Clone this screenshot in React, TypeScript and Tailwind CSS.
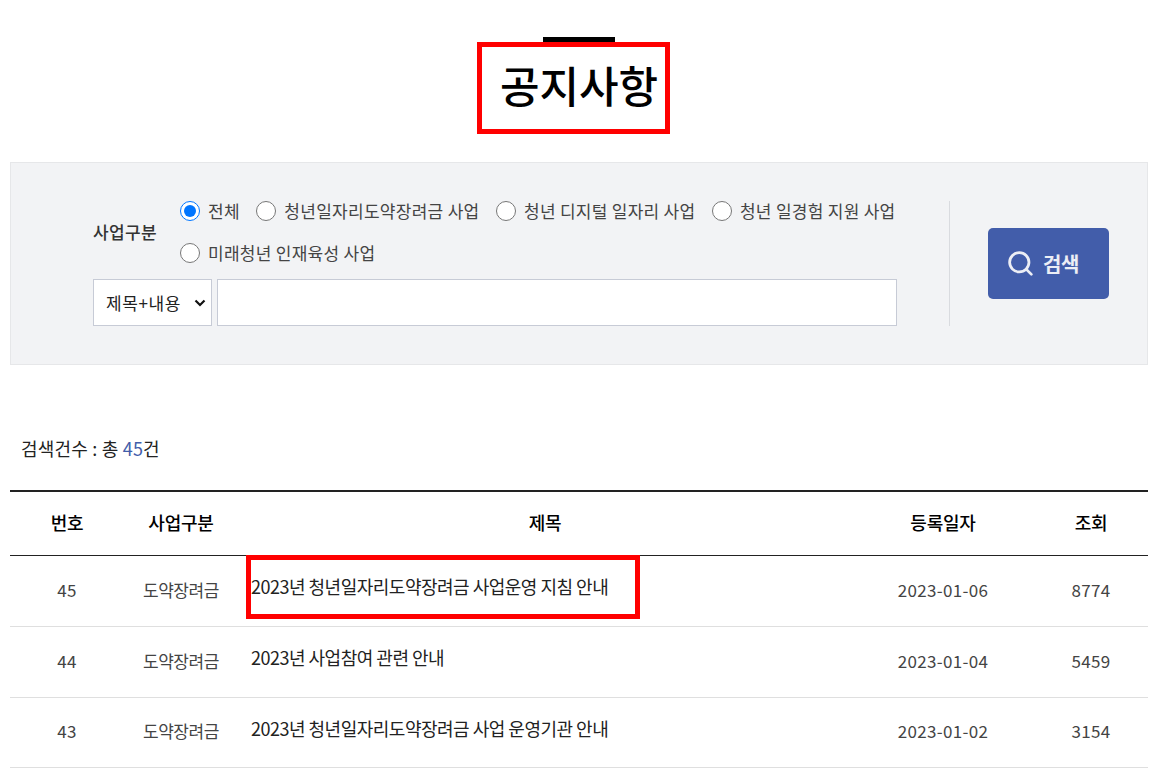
import { Search } from "lucide-react"

const font = "font-['Noto_Sans_CJK_KR','Noto_Sans',sans-serif]"

const kinds = [
  "전체",
  "청년일자리도약장려금 사업",
  "청년 디지털 일자리 사업",
  "청년 일경험 지원 사업",
  "미래청년 인재육성 사업",
]

const rows = [
  { no: 45, title: "2023년 청년일자리도약장려금 사업운영 지침 안내", date: "2023-01-06", views: 8774 },
  { no: 44, title: "2023년 사업참여 관련 안내", date: "2023-01-04", views: 5459 },
  { no: 43, title: "2023년 청년일자리도약장려금 사업 운영기관 안내", date: "2023-01-02", views: 3154 },
]

export default function App() {
  return (
    <div className={`${font} relative h-[774px] overflow-hidden bg-white text-[#222]`}>
      {/* title */}
      <div className="ml-[10px] flex w-[1138px] flex-col items-center pt-[37px]">
        <div className="h-[6px] w-[72px] bg-black" />
        <h1 className="mt-[9px] mb-[2px] h-[65px] text-[43px] leading-[65px] font-medium text-black">공지사항</h1>
      </div>
      <div className="absolute left-[477px] top-[42px] h-[92px] w-[193px] border-[5px] border-[#ff0000]" />

      {/* search */}
      <div className="ml-[10px] mt-[43px] flex h-[203px] w-[1138px] border border-[#e6e7e9] bg-[#f2f3f5] pl-[82px] pt-[38px]">
        <div className="h-[125px] w-[857px] border-r border-[#d9dbdf]">
          <div className="flex h-[62px] items-center">
            <div className="w-[87px] text-[17px] font-medium tracking-[0.4px] text-[#333]">사업구분</div>
            <div className="flex w-[740px] flex-wrap gap-y-[22px]">
              {kinds.map((k, i) => (
                <label key={k} className="mr-[16.5px] flex h-[20px] items-center text-[17px] tracking-[0.28px] text-[#444]">
                  <input type="radio" name="kind" defaultChecked={i === 0} className="m-0 mr-[8px] h-[20px] w-[20px] accent-[#0075ff]" />
                  {k}
                </label>
              ))}
            </div>
          </div>
          <div className="mt-[16px] flex h-[47px] gap-[5px]">
            <div className="flex w-[119px] items-center justify-between border border-[#c7cbd6] bg-white pl-[12px] pr-[5px] text-[17px] tracking-[0.6px] text-[#222]">
              <span>제목+내용</span>
              <svg width="12" height="8" viewBox="0 0 12 8" fill="none" stroke="#111" strokeWidth="2.2">
                <path d="M1.5 1.5 6 6l4.5-4.5" />
              </svg>
            </div>
            <input className="w-[680px] border border-[#c7cbd6] bg-white" />
          </div>
        </div>
        <div className="pl-[38px] pt-[27px]">
          <button className="flex h-[71px] w-[121px] items-center justify-center gap-[8px] rounded-[5px] bg-[#425daa] pr-[12px] text-[20px] font-bold tracking-[-0.5px] text-[#eceef5]">
            <Search size={29} strokeWidth={2.3} />
            검색
          </button>
        </div>
      </div>

      <div className="ml-[21px] mt-[70px] h-[26px] text-[18px] leading-[26px] tracking-[0.2px] text-[#222]">
        검색건수 : 총 <span className="text-[#425daa]">45</span>건
      </div>

      {/* list */}
      <table className="ml-[10px] mt-[29px] w-[1138px] table-fixed border-t-2 border-[#222]">
        <thead>
          <tr className="h-[64px] border-b border-[#222] text-[18px] font-medium tracking-[-0.2px] text-black">
            <th className="w-[114px] pb-[2px] font-medium">번호</th>
            <th className="w-[114px] pb-[2px] font-medium">사업구분</th>
            <th className="pb-[2px] font-medium">제목</th>
            <th className="w-[182px] pb-[2px] font-medium">등록일자</th>
            <th className="w-[114px] pb-[2px] font-medium">조회</th>
          </tr>
        </thead>
        <tbody>
          {rows.map((r, i) => (
            <tr key={r.no} className={`${i === 2 ? "h-[70px]" : "h-[71px]"} border-b border-[#dfdfdf] text-[17px] tracking-[0.3px] text-[#444]`}>
              <td className="pb-[2px] text-center">{r.no}</td>
              <td className="pb-[2px] text-center tracking-[-0.4px]">도약장려금</td>
              <td className="pb-[8px] pl-[13px] text-[18px] font-normal tracking-[-0.5px] text-[#222]">{r.title}</td>
              <td className="pb-[2px] text-center">{r.date}</td>
              <td className="pb-[2px] text-center">{r.views}</td>
            </tr>
          ))}
        </tbody>
      </table>
      <div className="absolute left-[246px] top-[555px] h-[64px] w-[394px] border-[5px] border-[#ff0000]" />
    </div>
  )
}
